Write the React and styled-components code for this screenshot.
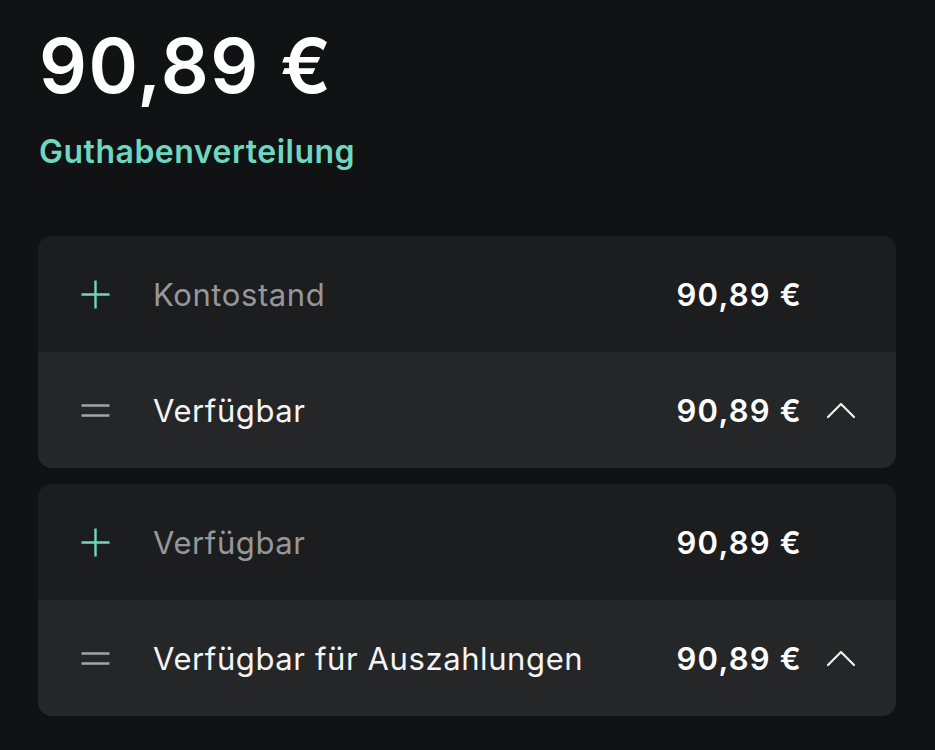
import React from 'react';
import styled, { createGlobalStyle } from 'styled-components';

const GlobalStyle = createGlobalStyle`
  html, body {
    margin: 0;
    padding: 0;
    background: #111214;
  }
  body {
    font-family: Inter, "Noto Sans", sans-serif;
    -webkit-font-smoothing: antialiased;
  }
`;

const Page = styled.div`
  width: 935px;
  height: 750px;
  box-sizing: border-box;
  padding: 22px 39px 0 38px;
  background: #111214;
  overflow: hidden;
`;

const Balance = styled.h1`
  margin: 0 0 0 1px;
  font-size: 75px;
  font-weight: 600;
  letter-spacing: 1.5px;
  line-height: 88px;
  color: #ffffff;
`;

const Subtitle = styled.div`
  margin: 22px 0 0 1px;
  font-size: 32px;
  font-weight: 600;
  letter-spacing: 0.5px;
  line-height: 40px;
  color: #6fd6c0;
`;

const Cards = styled.div`
  margin-top: 64px;
  display: flex;
  flex-direction: column;
  gap: 16px;
`;

const Card = styled.div`
  border-radius: 14px;
  overflow: hidden;
  background: #1c1d1f;
`;

const Row = styled.div`
  height: 116px;
  display: grid;
  grid-template-columns: 31px 1fr auto 54px;
  align-items: center;
  padding: 0 40px 0 42px;
  background: ${(p) => (p.$total ? '#252628' : '#1c1d1f')};
`;

const IconBox = styled.div`
  display: flex;
  align-items: center;
  justify-content: center;
  width: 31px;
  height: 31px;
`;

const Label = styled.div`
  margin-left: 42px;
  font-size: 31px;
  font-weight: 400;
  letter-spacing: 0.6px;
  color: ${(p) => (p.$muted ? '#96979b' : '#f4f4f5')};
`;

const Amount = styled.div`
  font-size: 31px;
  font-weight: 600;
  letter-spacing: 1.2px;
  color: #ffffff;
`;

const Chevron = styled.div`
  display: flex;
  justify-content: flex-end;
  align-items: center;
`;

const PlusIcon = () => (
  <svg width="31" height="31" viewBox="0 0 31 31">
    <path d="M15.5 1.5v28M1.5 15.5h28" stroke="#6fd6c0" strokeWidth="2.4" fill="none" />
  </svg>
);

const EqualsIcon = () => (
  <svg width="31" height="31" viewBox="0 0 31 31">
    <path d="M1.5 10.5h28M1.5 20.5h28" stroke="#a3a4a8" strokeWidth="2.4" fill="none" />
  </svg>
);

const ChevronUp = () => (
  <svg width="30" height="18" viewBox="0 0 30 18">
    <path d="M2 16L15 3l13 13" stroke="#f4f4f5" strokeWidth="2.2" fill="none" strokeLinecap="round" strokeLinejoin="round" />
  </svg>
);

const groups = [
  { from: 'Kontostand', to: 'Verfügbar' },
  { from: 'Verfügbar', to: 'Verfügbar für Auszahlungen' },
];

export default function App() {
  return (
    <Page>
      <GlobalStyle />
      <Balance>90,89 €</Balance>
      <Subtitle>Guthabenverteilung</Subtitle>
      <Cards>
        {groups.map((g) => (
          <Card key={g.to}>
            <Row>
              <IconBox><PlusIcon /></IconBox>
              <Label $muted>{g.from}</Label>
              <Amount>90,89 €</Amount>
              <Chevron />
            </Row>
            <Row $total>
              <IconBox><EqualsIcon /></IconBox>
              <Label>{g.to}</Label>
              <Amount>90,89 €</Amount>
              <Chevron><ChevronUp /></Chevron>
            </Row>
          </Card>
        ))}
      </Cards>
    </Page>
  );
}
